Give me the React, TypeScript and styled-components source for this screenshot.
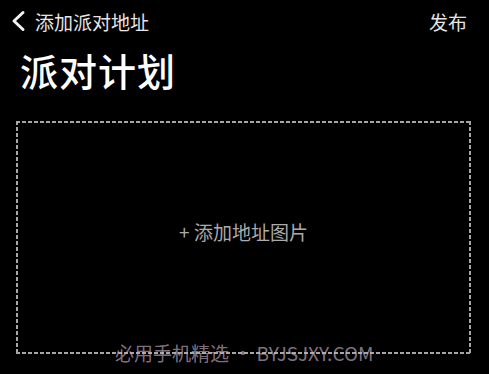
import React from 'react';
import styled, { createGlobalStyle } from 'styled-components';

const GlobalStyle = createGlobalStyle`
  html, body {
    margin: 0;
    padding: 0;
    background: #000;
  }
  body {
    font-family: "Noto Sans CJK SC", "Noto Sans", sans-serif;
  }
`;

const Page = styled.div`
  position: relative;
  width: 489px;
  height: 374px;
  background: #000;
  overflow: hidden;
`;

const Header = styled.div`
  display: flex;
  align-items: center;
  justify-content: space-between;
  height: 42px;
  padding: 0 22px 0 10px;
  box-sizing: border-box;
`;

const Back = styled.div`
  display: flex;
  align-items: center;
  gap: 9px;
  color: #e6e6e6;
  font-size: 19px;
`;

const Publish = styled.div`
  color: #e6e6e6;
  font-size: 19px;
`;

const Title = styled.h1`
  margin: 3px 0 0 20px;
  font-size: 38px;
  line-height: 50px;
  font-weight: 500;
  color: #fff;
  letter-spacing: 1px;
`;

const dash = '#a6a6a6';

const UploadBox = styled.div`
  margin: 26px 0 0 16px;
  width: 455px;
  height: 233px;
  box-sizing: border-box;
  padding-bottom: 12px;
  background-image:
    repeating-linear-gradient(90deg, ${dash} 0 4px, transparent 4px 6px),
    repeating-linear-gradient(90deg, ${dash} 0 4px, transparent 4px 6px),
    repeating-linear-gradient(180deg, ${dash} 0 4px, transparent 4px 6px),
    repeating-linear-gradient(180deg, ${dash} 0 4px, transparent 4px 6px);
  background-size: 100% 2px, 100% 2px, 2px 100%, 2px 100%;
  background-position: 0 0, 0 100%, 0 0, 100% 0;
  background-repeat: no-repeat;
  display: flex;
  align-items: center;
  justify-content: center;
  color: #ababab;
  font-size: 19px;
`;

const Watermark = styled.div`
  position: absolute;
  left: 115px;
  top: 339px;
  font-size: 19px;
  line-height: 28px;
  color: rgba(200, 180, 200, 0.65);
  white-space: nowrap;
`;

export default function App() {
  return (
    <Page>
      <GlobalStyle />
      <Header>
        <Back>
          <svg width="16" height="22" viewBox="0 0 16 22">
            <path d="M13 2.5 L4 11 L13 19.5" fill="none" stroke="#f2f2f2" strokeWidth="3" strokeLinecap="round" strokeLinejoin="round" />
          </svg>
          <span>添加派对地址</span>
        </Back>
        <Publish>发布</Publish>
      </Header>
      <Title>派对计划</Title>
      <UploadBox>+ 添加地址图片</UploadBox>
      <Watermark>必用手机精选 • BYJSJXY.COM</Watermark>
    </Page>
  );
}
